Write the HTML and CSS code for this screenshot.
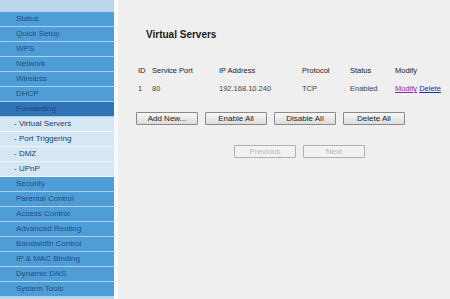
FILE: index.html
```html
<!DOCTYPE html>
<html lang="en">
<head>
    <meta charset="UTF-8">
    <title>Virtual Servers</title>
    <link rel="stylesheet" href="styles.css">
</head>
<body>
    <div class="page">
        <ul class="menu">
            <li class="menu-top"></li>
            <li>Status</li>
            <li>Quick Setup</li>
            <li>WPS</li>
            <li>Network</li>
            <li>Wireless</li>
            <li>DHCP</li>
            <li class="active">Forwarding</li>
            <li class="sub">- Virtual Servers</li>
            <li class="sub">- Port Triggering</li>
            <li class="sub">- DMZ</li>
            <li class="sub">- UPnP</li>
            <li>Security</li>
            <li>Parental Control</li>
            <li>Access Control</li>
            <li>Advanced Routing</li>
            <li>Bandwidth Control</li>
            <li>IP &amp; MAC Binding</li>
            <li>Dynamic DNS</li>
            <li>System Tools</li>
        </ul>
        <div class="main">
            <h1>Virtual Servers</h1>
            <table class="servers">
                <thead>
                    <tr>
                        <th class="c-id">ID</th>
                        <th class="c-port">Service Port</th>
                        <th class="c-ip">IP Address</th>
                        <th class="c-proto">Protocol</th>
                        <th class="c-status">Status</th>
                        <th>Modify</th>
                    </tr>
                </thead>
                <tbody>
                    <tr>
                        <td>1</td>
                        <td>80</td>
                        <td>192.168.10.240</td>
                        <td>TCP</td>
                        <td>Enabled</td>
                        <td><a href="#" class="visited">Modify</a> <a href="#">Delete</a></td>
                    </tr>
                </tbody>
            </table>
            <div class="actions">
                <button>Add New...</button>
                <button>Enable All</button>
                <button>Disable All</button>
                <button>Delete All</button>
            </div>
            <div class="pager">
                <button disabled>Previous</button>
                <button disabled>Next</button>
            </div>
        </div>
    </div>
</body>
</html>
```

FILE: styles.css
```css
body {
    margin: 0;
    font-family: Arial, 'Liberation Sans', sans-serif;
    background-color: #efefef;
}
.page {
    display: flex;
    width: 450px;
    height: 299px;
    overflow: hidden;
}
.menu {
    list-style: none;
    margin: 0;
    padding: 0;
    width: 114px;
    flex: none;
    background-color: #b9d6ea;
    border-right: 4px solid #f6fafd;
}
.menu li {
    height: 14px;
    line-height: 14px;
    padding-left: 16px;
    font-size: 8px;
    color: #1d4f84;
    background-color: #4f9dd6;
    border-bottom: 1px solid #a9d0ee;
}
.menu .menu-top {
    height: 11px;
    background-color: #b9d6ea;
    border-bottom: 1px solid #b9d6ea;
}
.menu .active {
    background-color: #2f74b8;
    color: #1f4a7a;
}
.menu .sub {
    padding-left: 14px;
    background-color: #d6e7f4;
    color: #17406e;
    border-bottom: 1px solid #eef5fb;
}
.main {
    flex: 1;
    padding: 0 0 0 18px;
}
.main h1 {
    margin: 29px 0 26px 10px;
    font-size: 10px;
    color: #1a1a1a;
}
.servers {
    border-collapse: collapse;
    font-size: 7.5px;
    color: #222;
}
.servers th {
    font-weight: normal;
    text-align: left;
    padding: 0 0 9px 2px;
}
.servers td {
    padding: 0 0 0 2px;
    color: #444;
}
.servers .c-id { width: 12px; }
.servers .c-port { width: 65px; }
.servers .c-ip { width: 81px; }
.servers .c-proto { width: 46px; }
.servers .c-status { width: 43px; }
.servers a {
    color: #1e2aa8;
    text-decoration: underline;
}
.servers a.visited {
    color: #8a2a9e;
}
.actions {
    display: flex;
    gap: 7px;
    margin-top: 19px;
}
.actions button, .pager button {
    width: 62px;
    height: 13px;
    padding: 0;
    font-family: Arial, 'Liberation Sans', sans-serif;
    font-size: 8px;
    color: #222;
    background: linear-gradient(#f7f7f7, #dcdcdc);
    border: 1px solid #8a8a8a;
    border-radius: 1px;
}
.pager {
    display: flex;
    gap: 7px;
    margin: 20px 0 0 98px;
}
.pager button {
    background: #f2f2f2;
    border-color: #b0b0b0;
    color: #b8b8b8;
}
```
